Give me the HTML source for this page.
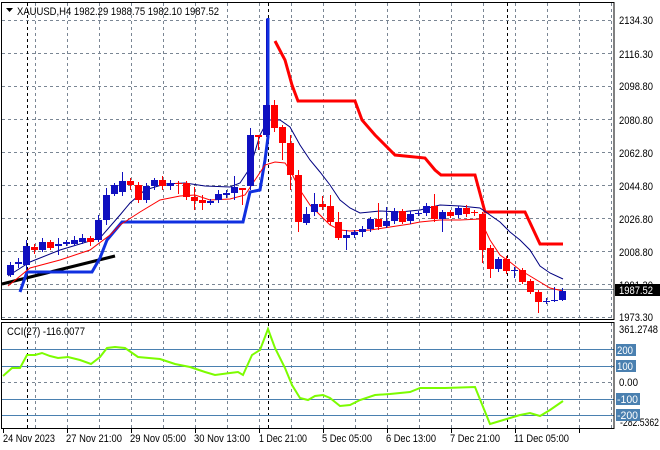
<!DOCTYPE html>
<html><head><meta charset="utf-8"><style>
html,body{margin:0;padding:0;background:#fff;}
svg{display:block;font-family:"Liberation Sans",sans-serif;}
</style></head><body>
<svg id="s" width="660" height="450" viewBox="0 0 660 450" xmlns="http://www.w3.org/2000/svg">
<rect width="660" height="450" fill="#fff"/>
<g id="grid" stroke="#7a8694" stroke-width="1" stroke-dasharray="3,3" fill="none"></g>
<g id="sep" stroke="#000" stroke-width="1" stroke-dasharray="3,3" fill="none">
<line x1="27.5" y1="3" x2="27.5" y2="319"/><line x1="268.5" y1="3" x2="268.5" y2="319"/><line x1="507.5" y1="3" x2="507.5" y2="319"/>
<line x1="27.5" y1="323" x2="27.5" y2="428"/><line x1="268.5" y1="323" x2="268.5" y2="428"/><line x1="507.5" y1="323" x2="507.5" y2="428"/>
</g>
<line x1="2" y1="289.5" x2="614" y2="289.5" stroke="#7a8a99" stroke-width="1"/>
<g stroke="#4a80b0" stroke-width="1">
<line x1="2" y1="349.5" x2="614" y2="349.5"/><line x1="2" y1="366.5" x2="614" y2="366.5"/>
<line x1="2" y1="399.5" x2="614" y2="399.5"/><line x1="2" y1="415.5" x2="614" y2="415.5"/>
</g>
<line x1="2" y1="382.5" x2="614" y2="382.5" stroke="#7a8694" stroke-dasharray="3,3"/>
<polyline fill="none" stroke="#000" stroke-width="3" points="2,284 115,256"/>
<polyline fill="none" stroke="#1030e0" stroke-width="3" points="20,292 27,272 92,272 100,258 107,240 122,222 243,222 250,192 260,190 265,160 268,137 268,18"/>
<polyline fill="none" stroke="#ff0000" stroke-width="3" points="275,41 285,60 292,85 298,101 355,101 362,120 375,135 395,155 425,158 435,170 441,175 475,175 485,212 525,212 540,244 563,244"/>
<polyline fill="none" stroke="#000080" stroke-width="1" points="8,276 30,262 60,250 100,238 120,215 130,203 145,190 165,184 185,183 205,186 230,187 240,183 250,168 260,135 268,120 280,120 290,127 300,145 310,160 320,172 330,185 340,200 350,208 360,213 370,212 380,211 400,212 420,210 440,205 460,206 480,208 490,215 500,222 510,232 520,240 530,250 540,266 550,273 563,279"/>
<polyline fill="none" stroke="#ff0000" stroke-width="1" points="8,286 30,268 60,260 90,250 110,235 120,225 140,212 160,200 180,196 195,195 210,200 230,199 245,195 255,180 265,165 275,162 285,163 290,170 300,190 310,205 320,215 330,225 340,230 350,231 370,230 390,227 410,224 420,222 440,220 460,220 480,219 490,240 500,255 510,262 520,270 540,282 550,288 563,291"/>
<g id="c"></g>
<polyline fill="none" stroke="#7cfc00" stroke-width="2" points="3,376 12,368 20,368 27,355 35,355 42,353 50,356 58,358 68,357 80,360 91,364 100,357 107,348 115,347 125,348 138,357 160,359 175,364 190,367 205,372 215,375 230,373 238,372 243,375 252,355 260,350 268,329 275,348 285,368 292,385 300,398 308,400 315,396 323,395 330,398 340,406 350,405 360,400 375,395 390,394 410,392 420,388 445,388 475,387 490,424 500,421 510,418 520,415 530,413 540,416 550,410 563,401"/>
<g fill="none" stroke="#000" stroke-width="1">
<rect x="1.5" y="2.5" width="612.5" height="317"/>
<rect x="1.5" y="322.5" width="612.5" height="106"/>
</g>
<path d="M6 8 L13 8 L9.5 12 Z" fill="#000"/>
<g font-size="11" fill="#000" lengthAdjust="spacingAndGlyphs">
<text x="17" y="15" textLength="202" lengthAdjust="spacingAndGlyphs">XAUUSD,H4  1982.29 1988.75 1982.10 1987.52</text>
<text x="7" y="335" textLength="78" lengthAdjust="spacingAndGlyphs">CCI(27) -116.0077</text>
</g>
<g font-size="11" fill="#000">
<text x="619" y="24" textLength="34" lengthAdjust="spacingAndGlyphs">2134.30</text><text x="619" y="58" textLength="34" lengthAdjust="spacingAndGlyphs">2116.30</text><text x="619" y="90" textLength="34" lengthAdjust="spacingAndGlyphs">2098.80</text>
<text x="619" y="124" textLength="34" lengthAdjust="spacingAndGlyphs">2080.80</text><text x="619" y="157" textLength="34" lengthAdjust="spacingAndGlyphs">2062.80</text><text x="619" y="190" textLength="34" lengthAdjust="spacingAndGlyphs">2044.80</text>
<text x="619" y="223" textLength="34" lengthAdjust="spacingAndGlyphs">2026.80</text><text x="619" y="256" textLength="34" lengthAdjust="spacingAndGlyphs">2008.80</text><text x="619" y="289" textLength="34" lengthAdjust="spacingAndGlyphs">1991.30</text>
<text x="619" y="321" textLength="34" lengthAdjust="spacingAndGlyphs">1973.30</text>
<text x="619" y="333" textLength="39" lengthAdjust="spacingAndGlyphs">361.2748</text><text x="619" y="386" textLength="19" lengthAdjust="spacingAndGlyphs">0.00</text><text x="620" y="426" textLength="39" lengthAdjust="spacingAndGlyphs">-282.5362</text>
</g>
<rect x="615" y="284" width="45" height="12" fill="#000"/>
<text x="619" y="294" font-size="11" fill="#fff" textLength="34" lengthAdjust="spacingAndGlyphs">1987.52</text>
<g fill="#4a80b0"><rect x="616" y="344" width="20" height="12"/><rect x="616" y="360" width="20" height="12"/><rect x="616" y="393" width="24" height="12"/><rect x="616" y="409" width="24" height="12"/></g>
<g font-size="11" fill="#fff"><text x="617" y="354" textLength="16" lengthAdjust="spacingAndGlyphs">200</text><text x="617" y="370" textLength="16" lengthAdjust="spacingAndGlyphs">100</text><text x="617" y="403" textLength="21" lengthAdjust="spacingAndGlyphs">-100</text><text x="617" y="419" textLength="21" lengthAdjust="spacingAndGlyphs">-200</text></g>
<g font-size="11" fill="#000">
<text x="3" y="442" textLength="52" lengthAdjust="spacingAndGlyphs">24 Nov 2023</text><text x="66" y="442" textLength="56" lengthAdjust="spacingAndGlyphs">27 Nov 21:00</text><text x="130" y="442" textLength="56" lengthAdjust="spacingAndGlyphs">29 Nov 05:00</text>
<text x="194" y="442" textLength="56" lengthAdjust="spacingAndGlyphs">30 Nov 13:00</text><text x="259" y="442" textLength="48" lengthAdjust="spacingAndGlyphs">1 Dec 21:00</text><text x="322" y="442" textLength="50" lengthAdjust="spacingAndGlyphs">5 Dec 05:00</text>
<text x="386" y="442" textLength="50" lengthAdjust="spacingAndGlyphs">6 Dec 13:00</text><text x="450" y="442" textLength="50" lengthAdjust="spacingAndGlyphs">7 Dec 21:00</text><text x="514" y="442" textLength="55" lengthAdjust="spacingAndGlyphs">11 Dec 05:00</text>
</g>
<g stroke="#000" id="ticks"></g>
</svg>
<script>
var ns="http://www.w3.org/2000/svg";
function el(p,t,a){var e=document.createElementNS(ns,t);for(var k in a)e.setAttribute(k,a[k]);p.appendChild(e);return e;}
var g=document.getElementById('grid');
for(var x=35;x<614;x+=32){el(g,'line',{x1:x+.5,y1:3,x2:x+.5,y2:319});el(g,'line',{x1:x+.5,y1:323,x2:x+.5,y2:428});}
[20,53,86,119,152,185,218,251,284,317].forEach(function(y){el(g,'line',{x1:2,y1:y+.5,x2:614,y2:y+.5});});
var tk=document.getElementById('ticks');
for(var x=3;x<614;x+=64){el(tk,'line',{x1:x+.5,y1:429,x2:x+.5,y2:433});}
var C=[[265,275,262,277,1],[262,264,258,268,1],[246,265,240,270,1],[247,250,244,254,0],[242,250,238,252,1],[242,248,240,250,0],[244,246,238,255,1],[242,244,240,246,1],[240,244,236,246,1],[238,242,234,244,1],[238,242,236,246,0],[220,240,215,242,1],
[195,220,188,225,1],[185,194,183,196,1],[181,192,172,196,1],[181,185,178,190,0],[185,200,182,203,0],[186,200,183,203,1],[180,186,178,190,1],[180,186,176,190,0],[183,186,180,190,1],[183,184,181,194,0],[183,197,181,200,0],[197,201,187,210,0],[200,203,195,210,0],[201,203,199,205,1],[194,200,190,203,1],[193,195,190,198,1],[187,193,176,200,1],[188,190,188,205,0],
[135,186,128,190,1],[135,137,135,150,0],[105,135,19,137,1],[105,128,100,132,0],[127,143,125,160,0],[143,175,135,190,0],[175,222,170,232,0],[214,223,207,225,1],[204,212,193,216,1],[204,207,196,210,0],[206,222,195,225,0],[222,238,212,240,0],[235,238,230,250,1],[232,235,230,238,1],[229,232,226,237,1],[219,229,217,232,1],[219,227,203,230,0],[221,226,207,228,1],[211,221,208,224,1],[211,222,209,224,0],[214,221,211,224,1],[213,214,211,216,1],[206,213,203,216,1],[206,219,194,222,0],[212,219,210,232,1],[212,216,210,218,0],[208,215,206,218,1],[208,214,205,217,0],[212,213,210,216,0],
[214,250,212,263,0],[248,269,245,278,0],[259,269,257,272,1],[259,271,256,274,0],[270,271,267,278,1],[270,282,268,284,0],[281,292,279,294,0],[292,302,290,313,0],[301,302,298,304,1],[300,301,287,302,1],[291,300,288,301,1]];
var cg=document.getElementById('c');
C.forEach(function(c,i){var x=10+8*i;var col=c[4]?'#1010c0':'#ff0000';
el(cg,'line',{x1:x+.5,y1:c[2],x2:x+.5,y2:c[3],stroke:col,'stroke-width':1});
el(cg,'rect',{x:x-3,y:c[0],width:7,height:Math.max(1,c[1]-c[0]),fill:col});});
</script>
</body></html>
